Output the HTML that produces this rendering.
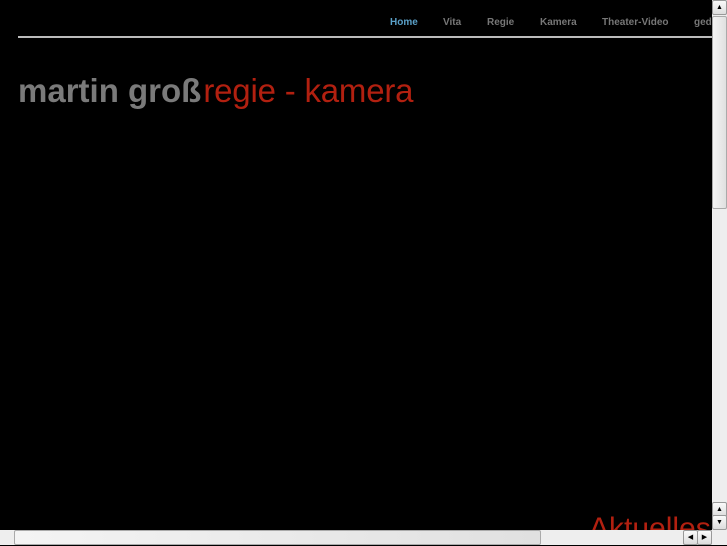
<!DOCTYPE html>
<html><head><meta charset="utf-8"><style>
body{margin:0;width:727px;height:545px;background:#000;overflow:hidden;position:relative;font-family:"Liberation Sans",sans-serif}
.nav{position:absolute;top:17px;font-size:10px;font-weight:bold;color:#777}
.line{position:absolute;left:18px;top:36px;width:694px;height:2px;background:#bbb}
.title{position:absolute;left:18px;top:72px;font-size:33px;white-space:nowrap;letter-spacing:0}
.g{color:#7a7a7a;font-weight:bold;margin-right:2px}.r{color:#b22010;letter-spacing:-0.2px}
.akt{position:absolute;left:589px;top:512px;font-size:30px;color:#b22010}
.vs{position:absolute;left:712px;top:0;width:15px;height:530px;background:#eee}
.hs{position:absolute;left:0;top:530px;width:712px;height:15px;background:#eee}
.btn{position:absolute;width:13px;height:13px;background:linear-gradient(#fafafa,#ddd);border:1px solid #999;border-radius:2px;font-size:7px;text-align:center;line-height:13px;color:#000}
.thumb{position:absolute;background:linear-gradient(90deg,#f4f4f4,#e0e0e0);border:1px solid #aaa;border-radius:2px}
.corner{position:absolute;left:712px;top:530px;width:15px;height:15px;background:#eee}
</style></head><body>
<div class="nav" style="left:390px;color:#5aa0c8">Home</div>
<div class="nav" style="left:443px">Vita</div>
<div class="nav" style="left:487px">Regie</div>
<div class="nav" style="left:540px">Kamera</div>
<div class="nav" style="left:602px">Theater-Video</div>
<div class="nav" style="left:694px">ged</div>
<div class="line"></div>
<div class="title"><span class="g">martin groß</span><span class="r">regie - kamera</span></div>
<div class="akt">Aktuelles</div>
<div class="vs">
<div class="btn" style="left:0;top:0">▲</div>
<div class="thumb" style="left:0;top:16px;width:13px;height:191px"></div>
<div class="btn" style="left:0;top:502px">▲</div>
<div class="btn" style="left:0;top:515px">▼</div>
</div>
<div class="hs">
<div class="thumb" style="left:14px;top:0;width:525px;height:13px"></div>
<div class="btn" style="left:683px;top:0">◀</div>
<div class="btn" style="left:697px;top:0">▶</div>
</div>
<div class="corner"></div>
</body></html>
